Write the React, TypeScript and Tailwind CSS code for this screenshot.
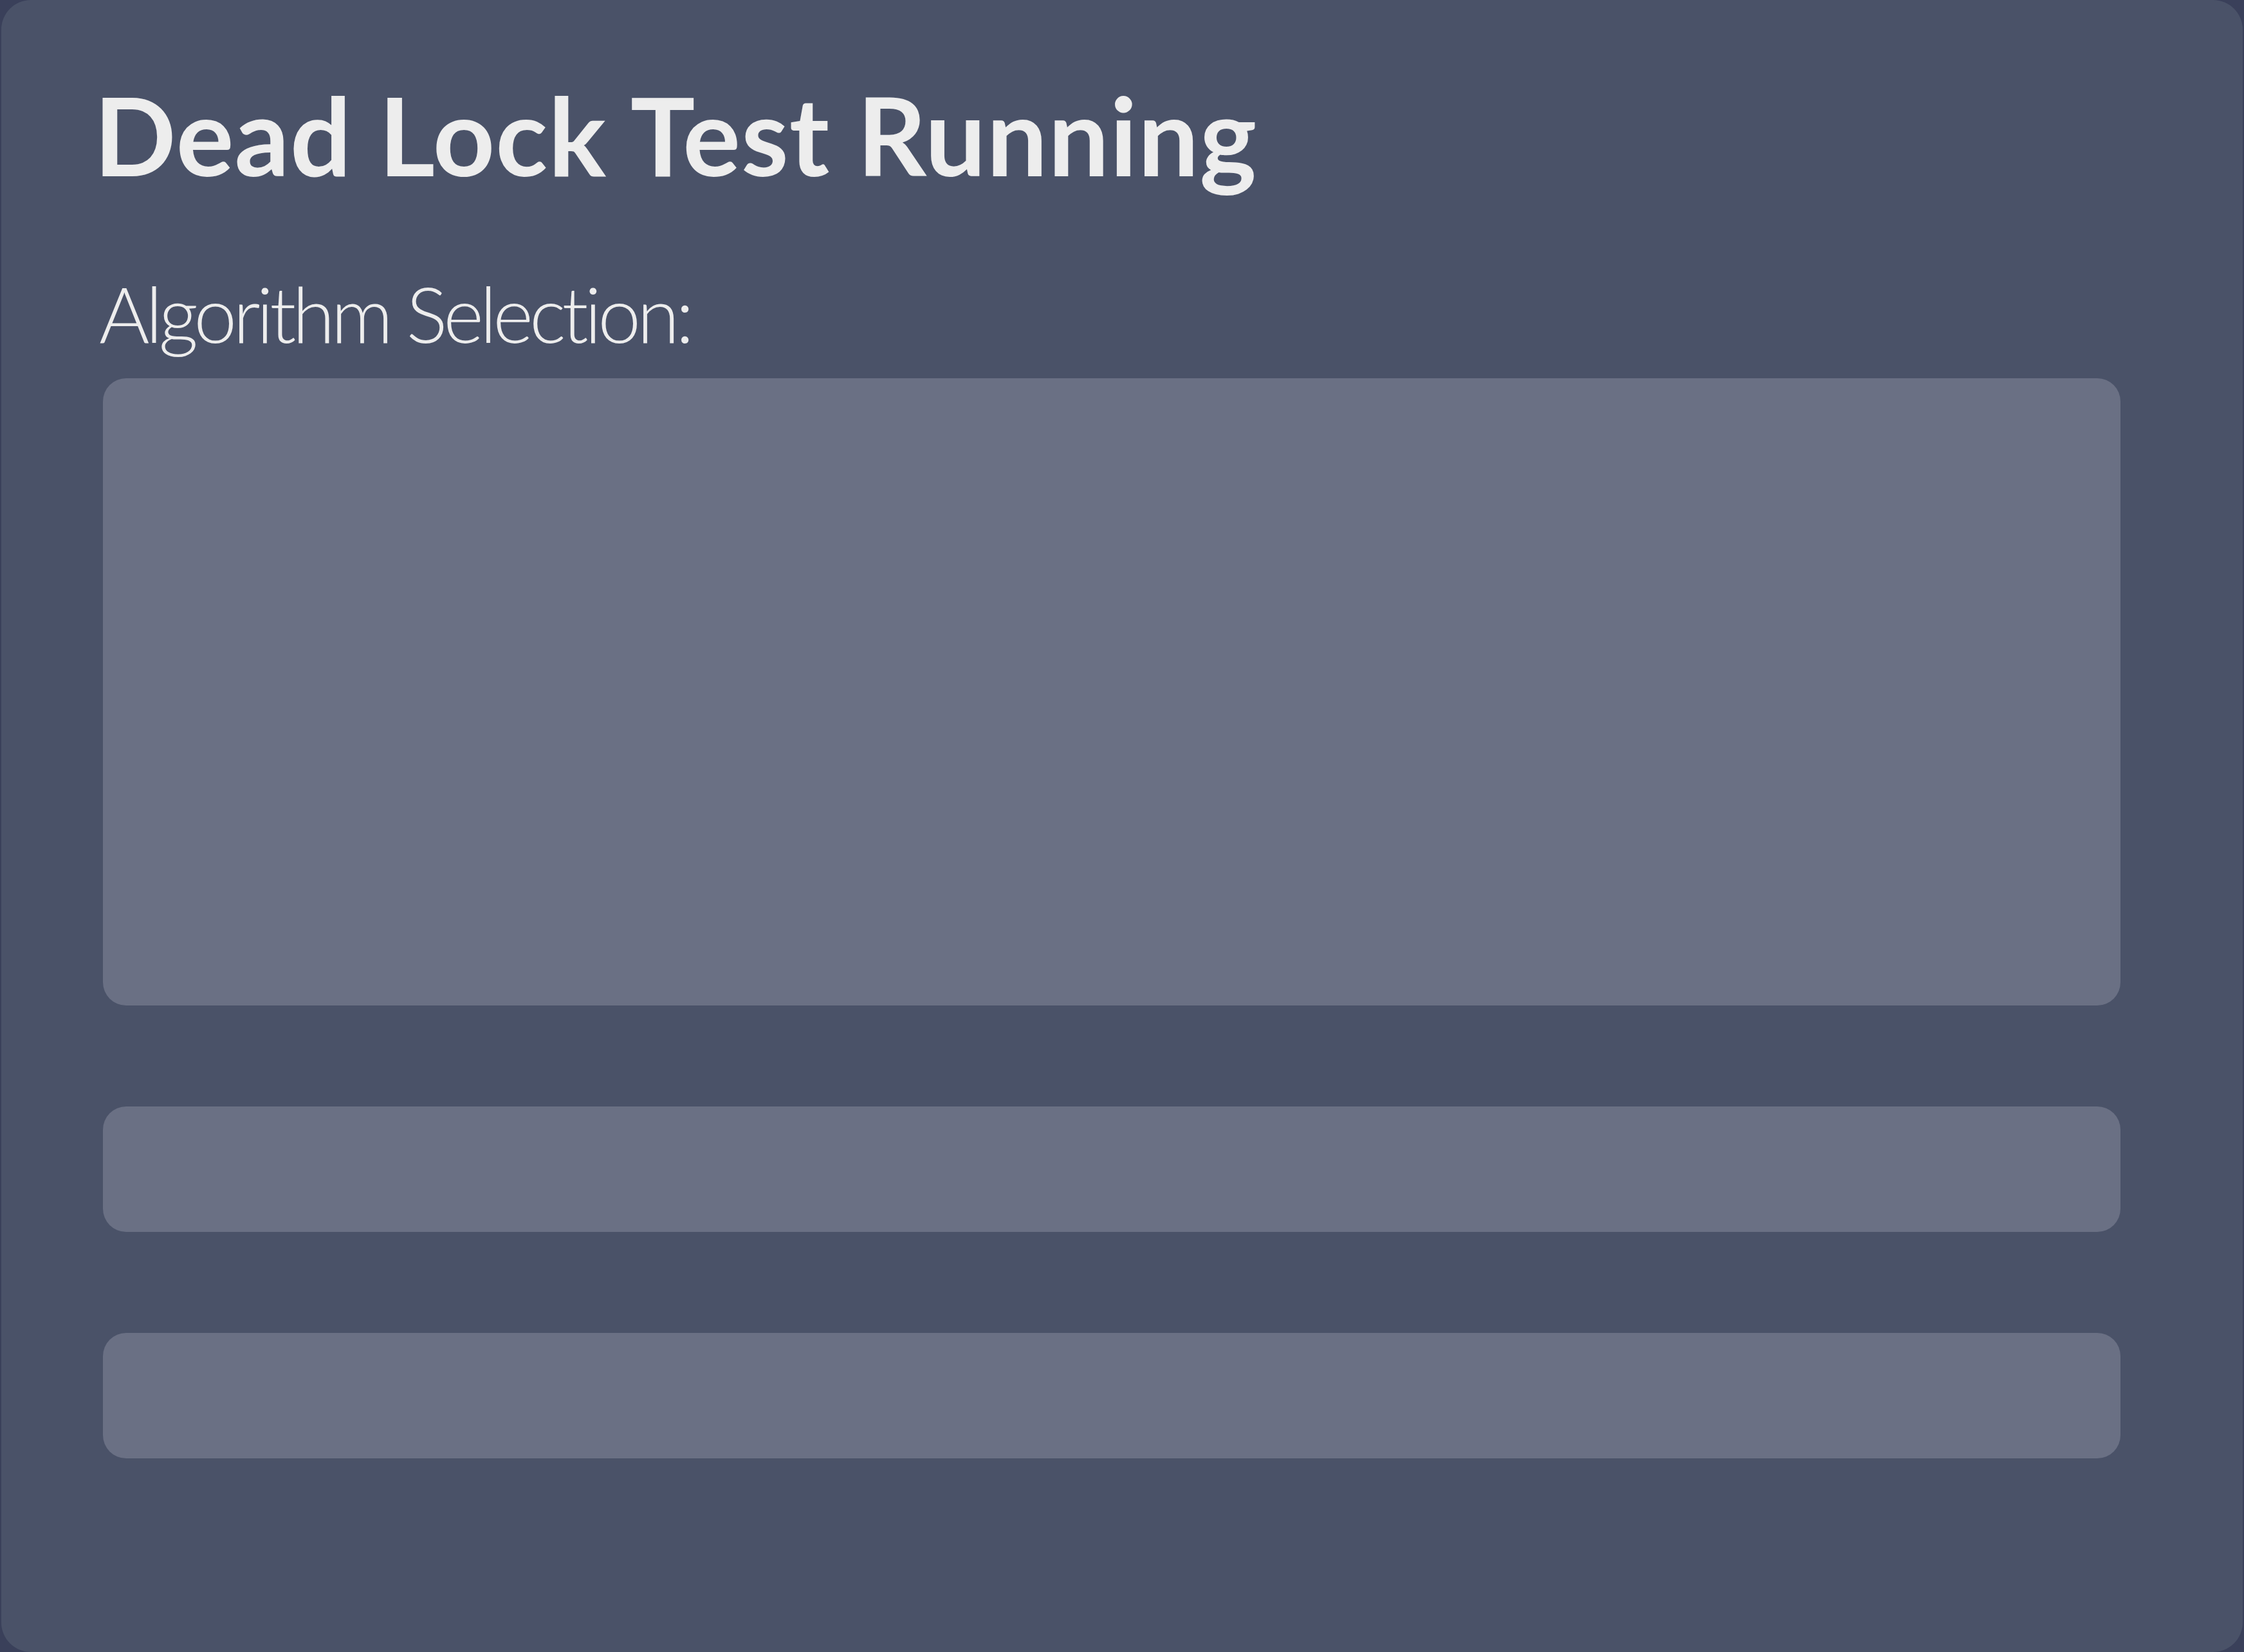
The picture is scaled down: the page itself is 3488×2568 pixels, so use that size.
export default function App() {
  return (
    <div className="w-[3488px] h-[2568px] bg-[#3a405a] px-[2px] font-['Lato','Noto_Sans',sans-serif]">
      <div className="h-full rounded-[46px] bg-[#4a5268] pl-[156px] pr-[190px] pt-[125px]">
        <h1 className="-ml-[12px] text-[168px] leading-none font-bold text-[#ededed] tracking-[1px]">
          Dead Lock Test Running
        </h1>
        <p className="-ml-[4px] mt-[134px] text-[120px] leading-none font-light text-[#ededed] tracking-[-6px]">
          Algorithm Selection:
        </p>
        <div className="mt-[41px] flex flex-col gap-[157px] pl-[2px]">
          <div className="h-[975px] rounded-[36px] bg-[#6a7084]" />
          <div className="h-[195px] rounded-[36px] bg-[#6a7084]" />
          <div className="h-[195px] rounded-[36px] bg-[#6a7084]" />
        </div>
      </div>
    </div>
  );
}
